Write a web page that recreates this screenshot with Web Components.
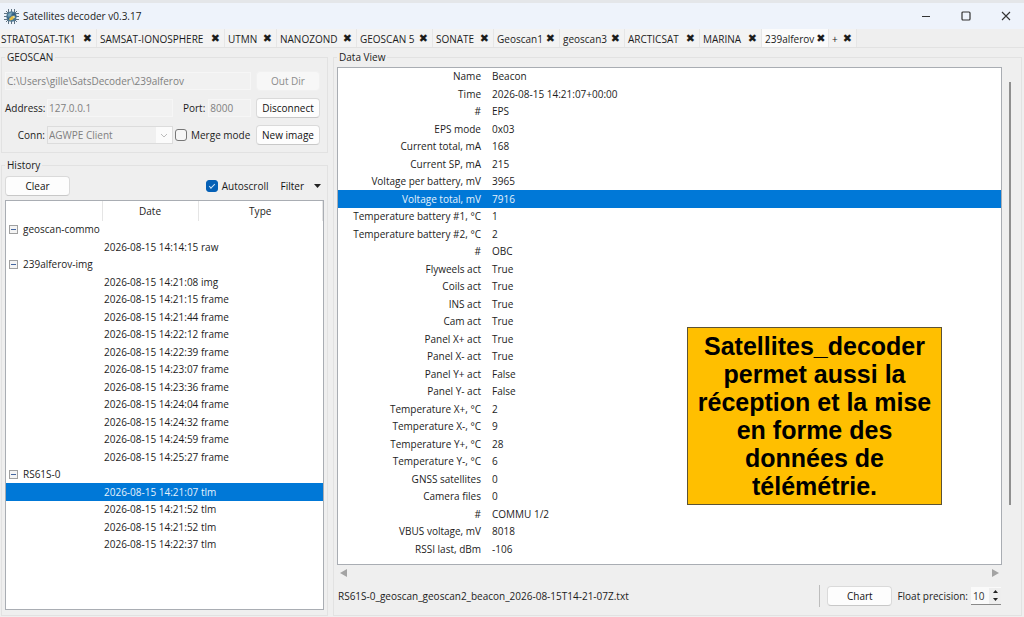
<!DOCTYPE html>
<html lang="en">
<head>
<meta charset="utf-8">
<title>Satellites decoder v0.3.17</title>
<style>
  html, body { margin: 0; background: #efefef; }
  body {
    --line: #e2e2e2;
    --select: #0078d7;
    font: 10px/14px "Open Sans", "Noto Sans", sans-serif;
    color: #1c1c1c;
  }
</style>
</head>
<body>
<decoder-app></decoder-app>

<script>
const define = (name, html, setup) => {
  customElements.define(name, class extends HTMLElement {
    constructor() {
      super();
      const root = this.attachShadow({ mode: 'open' });
      const t = document.createElement('template');
      t.innerHTML = html(this);
      root.append(t.content.cloneNode(true));
      if (setup) setup(this, root);
    }
  });
};

const buttonCss = `
  button { font: inherit; color: #111; background: #fdfdfd; border: 1px solid #dadada; border-bottom-color: #c8c8c8;
    border-radius: 4px; padding: 0; height: 20px; white-space: nowrap; box-sizing: border-box; }
  button:disabled { color: #8c8c8c; background: #f7f7f7; border-color: #f1f1f1; }
`;
const checkCss = `
  input[type=checkbox] { appearance: none; width: 12px; height: 12px; margin: 0; box-sizing: border-box; flex: none;
    border: 1px solid #777; border-radius: 3px; background: #f6f6f6; display: grid; place-items: center; }
  input[type=checkbox]:checked { background: #0560b6; border-color: #0560b6; }
  input[type=checkbox]:checked::before { content: ""; width: 5px; height: 2px; border: solid #cfe4f7; border-width: 0 0 1px 1px;
    transform: rotate(-45deg); margin-bottom: 2px; }
`;

define('title-bar', () => `
  <style>
    :host { display: flex; align-items: center; height: 26px; padding: 0 8px 0 4px; background: #eef3fb; border-top: 3px solid #e4e6e9; }
    h1 { font: inherit; margin: 0 auto 0 4px; }
    button { border: 0; background: none; padding: 0; width: 20px; height: 20px; margin-left: 20px; display: grid; place-items: center; }
    svg { display: block; }
  </style>
  <svg width="15" height="15" viewBox="0 0 15 15" aria-hidden="true">
    <path d="M4.5 0v15M7.5 0v15M10.5 0v15M0 4.5h15M0 7.5h15M0 10.5h15M2 2l11 11M13 2L2 13" stroke="#5f7382" stroke-width="1"/>
    <circle cx="7.5" cy="7.5" r="5.2" fill="#4d7794"/>
    <path d="M4 5.500q2-2.500 4-2l-1 3-2.500 1.500z" fill="#78a7bd"/>
    <path d="M8 5l3-1 1 3-2 1z" fill="#2f5b82"/>
    <path d="M5 10l3-3 2 1-1 2.500-3 1z" fill="#e8bd3b"/>
    <path d="M8.500 7l2-.5.5 2-1.500 1z" fill="#f0dc8a"/>
    <path d="M3 8l2 1-.5 1.500z" fill="#22577f"/>
  </svg>
  <h1>Satellites decoder v0.3.17</h1>
  <button aria-label="Minimize"><svg width="10" height="10"><path d="M1 5.500h8" stroke="#333"/></svg></button>
  <button aria-label="Maximize"><svg width="10" height="10"><rect x="1" y="1" width="8" height="8" rx="1" fill="none" stroke="#333" stroke-width="1.200"/></svg></button>
  <button aria-label="Close"><svg width="10" height="10"><path d="M1 1l8 8M9 1L1 9" stroke="#333" stroke-width="1.100"/></svg></button>
`);

define('tab-item', () => `
  <style>
    :host { display: flex; align-items: center; justify-content: space-between; gap: 2px; height: 18px; padding: 1px 4px 0 3px; box-sizing: border-box;
      background: #f3f3f3; border-right: 1px solid #e6e6e6; white-space: nowrap; }
    :host([active]) { background: #fbfbfb; }
    button { font: inherit; color: inherit; border: 0; background: none; padding: 0; }
    .x { font: 11px/14px "DejaVu Sans", sans-serif; }
  </style>
  <button class="tab"><slot></slot></button><button class="x" aria-label="Close tab">✖</button>
`);

define('tab-strip', () => `
  <style>
    :host { display: grid; grid-template-columns: 97px 128px 52px 80px 76px 61px 66px 65px 75px 62px 67px 28px;
      border-bottom: 1px solid var(--line); }
    tab-item:first-of-type { padding-left: 1px; }
  </style>
  <tab-item>STRATOSAT-TK1</tab-item><tab-item>SAMSAT-IONOSPHERE</tab-item><tab-item>UTMN</tab-item><tab-item>NANOZOND</tab-item><tab-item>GEOSCAN 5</tab-item><tab-item>SONATE</tab-item><tab-item>Geoscan1</tab-item><tab-item>geoscan3</tab-item><tab-item>ARCTICSAT</tab-item><tab-item>MARINA</tab-item><tab-item active>239alferov</tab-item><tab-item>+</tab-item>
`);

define('group-box', el => `
  <style>
    :host { display: flex; }
    fieldset { flex: 1; min-width: 0; margin: 0; padding: 0; border: 1px solid var(--line); display: flex; flex-direction: column; }
    legend { margin-left: 3px; padding: 0 2px; height: 14px; }
  </style>
  <fieldset><legend>${el.getAttribute('label')}</legend><slot></slot></fieldset>
`);

define('connection-panel', () => `
  <style>
    :host { display: grid; grid-template-columns: 40px 126px 79px 64px; gap: 7px 2px; padding: 7px 6px 7px 3px; align-items: center; }
    ${buttonCss} ${checkCss}
    input:not([type=checkbox]), select { font: inherit; color: #808080; background: #f1f1f1; border: 1px solid #f6f6f6; height: 18px; padding: 0 1px;
      box-sizing: border-box; width: 100%; min-width: 0; margin: 0; }
    .path { grid-column: span 3; padding-right: 3px; }
    .right { text-align: right; }
    .port { display: flex; align-items: center; gap: 3px; padding: 0 3px 0 8px; }
    .combo { display: grid; grid-template-columns: 1fr 16px; align-items: center; border: 1px solid #dcdcdc; height: 18px; box-sizing: border-box; }
    .combo select { appearance: none; height: 16px; border: 0; background: #f0f0f0; opacity: 1; }
    .combo svg { background: #fbfbfb; display: block; }
    .merge { display: flex; align-items: center; gap: 4px; white-space: nowrap; }
  </style>
  <div class="path"><input aria-label="Output folder" disabled value="C:\\Users\\gille\\SatsDecoder\\239alferov"></div>
  <button disabled>Out Dir</button>
  <label class="right" for="addr">Address:</label>
  <input id="addr" disabled value="127.0.0.1">
  <div class="port"><label for="port">Port:</label><input id="port" disabled value="8000"></div>
  <button>Disconnect</button>
  <label class="right" for="conn">Conn:</label>
  <div class="combo"><select id="conn" disabled><option>AGWPE Client</option></select>
    <svg width="16" height="16"><path d="M5 7l3 3 3-3" fill="none" stroke="#bbb"/></svg></div>
  <label class="merge"><input type="checkbox">Merge mode</label>
  <button>New image</button>
`);

const history = [
  ['geoscan-commo', ['2026-08-15 14:14:15 raw']],
  ['239alferov-img', ['2026-08-15 14:21:08 img', ...['21:15','21:44','22:12','22:39','23:07','23:36','24:04','24:32','24:59','25:27'].map(t => `2026-08-15 14:${t} frame`)]],
  ['RS61S-0', ['2026-08-15 14:21:07 tlm', '2026-08-15 14:21:52 tlm', '2026-08-15 14:21:52 tlm', '2026-08-15 14:22:37 tlm']],
];
const historyRows = history.map(([name, items]) =>
  `<tr><td><button aria-label="Collapse"><svg width="9" height="9"><rect x=".5" y=".5" width="8" height="8" fill="#f4f4f4" stroke="#a0a0a0"/><path d="M2 4.500h5" stroke="#4466a0"/></svg></button>${name}</td><td></td><td></td></tr>` +
  items.map(s => { const [d, h, k] = s.split(' ');
    return `<tr${h === '14:21:07' ? ' class="sel"' : ''}><td></td><td>${d} ${h}</td><td>${k}</td></tr>`; }).join('')).join('');

define('history-panel', () => `
  <style>
    :host { display: flex; flex-direction: column; flex: 1; padding: 4px 3px 5px; }
    ${buttonCss} ${checkCss}
    .bar { display: flex; align-items: center; padding: 0 3px 0 0; margin-bottom: 4px; }
    .bar > button:first-child { width: 65px; margin-right: auto; }
    .bar label { display: flex; align-items: center; gap: 4px; }
    .bar .filter { border: 0; background: none; margin-left: 12px; display: flex; align-items: center; gap: 10px; }
    .tree { flex: 1; background: #fff; border: 1px solid #a9adb3; }
    table { border-collapse: collapse; table-layout: fixed; width: 100%; }
    th { font-weight: normal; height: 20px; padding: 0; border-right: 1px solid #e5e5e5; }
    td { padding: 0 0 0 3px; height: 17px; line-height: 17px; white-space: nowrap; }
    td:nth-child(2) { padding-left: 2px; }
    tbody tr:nth-child(even) td { height: 18px; }
    td button { border: 0; border-radius: 0; background: none; width: 9px; height: 9px; margin-right: 5px; display: inline-block; vertical-align: -1px; }
    td svg { display: block; }
    .sel { background: var(--select); color: #e6f2fc; }
  </style>
  <div class="bar"><button>Clear</button><label><input type="checkbox" checked>Autoscroll</label>
    <button class="filter">Filter <svg width="7" height="4"><path d="M0 0h7L3.500 4z" fill="#222"/></svg></button></div>
  <div class="tree"><table>
    <colgroup><col style="width:96px"><col style="width:96px"><col></colgroup>
    <thead><tr><th></th><th>Date</th><th>Type</th></tr></thead><tbody>${historyRows}</tbody></table></div>
`);

const telemetry = [
  ['Name','Beacon'],['Time','2026-08-15 14:21:07+00:00'],['#','EPS'],['EPS mode','0x03'],['Current total, mA','168'],['Current SP, mA','215'],
  ['Voltage per battery, mV','3965'],['Voltage total, mV','7916'],['Temperature battery #1, °C','1'],['Temperature battery #2, °C','2'],
  ['#','OBC'],['Flyweels act','True'],['Coils act','True'],['INS act','True'],['Cam act','True'],['Panel X+ act','True'],['Panel X- act','True'],
  ['Panel Y+ act','False'],['Panel Y- act','False'],['Temperature X+, °C','2'],['Temperature X-, °C','9'],['Temperature Y+, °C','28'],
  ['Temperature Y-, °C','6'],['GNSS satellites','0'],['Camera files','0'],['#','COMMU 1/2'],['VBUS voltage, mV','8018'],['RSSI last, dBm','-106'],
];

define('note-card', () => `
  <style>
    :host { display: block; box-sizing: border-box; width: 255px; padding: 4px 8px; background: #ffbf00; border: 1px solid #5c5334;
      color: #000; font: bold 25px/28px "Liberation Sans", Arial, sans-serif; text-align: center; }
  </style><slot></slot>
`);

define('data-view', () => `
  <style>
    :host { display: flex; flex-direction: column; flex: 1; padding: 3px 10px 8px 3px; }
    ${buttonCss}
    .main { flex: 1; display: grid; grid-template-columns: 1fr 2px; gap: 7px; }
    .box { position: relative; background: #fff; border: 1px solid #a9adb3; }
    .thumb { background: #8f8f8f; margin: 15px 0 60px; }
    table { border-collapse: collapse; table-layout: fixed; width: 100%; }
    th, td { padding: 0; font-weight: normal; height: 17px; line-height: 17px; white-space: nowrap; }
    tr:nth-child(even) > * { height: 18px; }
    th { text-align: right; width: 143px; }
    td { padding-left: 11px; }
    .sel { background: var(--select); color: #e6f2fc; }
    note-card { position: absolute; top: 259px; right: 59px; }
    .scroll { display: flex; justify-content: space-between; padding: 4px 12px 0 3px; height: 12px; }
    .scroll svg { display: block; }
    footer { display: flex; align-items: center; height: 22px; margin-top: 4px; padding: 0 10px 0 1px; }
    footer output { margin-right: auto; }
    .rule { width: 1px; height: 22px; background: #bdbdbd; margin-right: 7px; }
    .chart { width: 65px; margin-right: 5px; }
    .spin { display: grid; grid-template-columns: 18px 12px; align-items: center; margin-left: 3px; height: 17px; background: #fafafa; border-bottom: 1px solid #8a8a8a; }
    .spin input { appearance: textfield; font: inherit; color: #333; border: 0; background: none; padding: 0 0 0 2px; margin: 0; width: 18px; box-sizing: border-box; }
    .spin input::-webkit-inner-spin-button { display: none; }
    .spin button { display: grid; place-items: center; height: 8px; width: 12px; border: 0; border-radius: 0; background: #eee; }
  </style>
  <div class="main">
    <div class="box"><table><tbody>${telemetry.map(([k, v], i) =>
      `<tr${i === 7 ? ' class="sel"' : ''}><th scope="row">${k}</th><td>${v}</td></tr>`).join('')}</tbody></table>
      <note-card>Satellites_decoder permet aussi la réception et la mise en forme des données de télémétrie.</note-card>
    </div>
    <div class="thumb"></div>
  </div>
  <div class="scroll"><svg width="7" height="8"><path d="M7 0v8L0 4z" fill="#a3a3a3"/></svg><svg width="7" height="8"><path d="M0 0v8l7-4z" fill="#a3a3a3"/></svg></div>
  <footer><output>RS61S-0_geoscan_geoscan2_beacon_2026-08-15T14-21-07Z.txt</output>
    <span class="rule"></span><button class="chart">Chart</button><label for="prec">Float precision:</label>
    <div class="spin"><input id="prec" type="number" value="10"><div>
      <button aria-label="Increase"><svg width="5" height="3"><path d="M0 3h5L2.500 0z" fill="#222"/></svg></button>
      <button aria-label="Decrease"><svg width="5" height="3"><path d="M0 0h5L2.500 3z" fill="#222"/></svg></button></div></div>
  </footer>
`);

define('decoder-app', () => `
  <style>
    :host { display: flex; flex-direction: column; min-height: 100vh; }
    main { flex: 1; display: grid; grid-template-columns: 327px 1fr; gap: 5px; padding: 2px 2px 1px 1px; }
    .side { display: flex; flex-direction: column; gap: 5px; }
    .grow { flex: 1; }
  </style>
  <title-bar></title-bar>
  <tab-strip></tab-strip>
  <main>
    <div class="side">
      <group-box label="GEOSCAN"><connection-panel></connection-panel></group-box>
      <group-box class="grow" label="History"><history-panel></history-panel></group-box>
    </div>
    <group-box label="Data View"><data-view></data-view></group-box>
  </main>
`);
</script>
</body>
</html>
